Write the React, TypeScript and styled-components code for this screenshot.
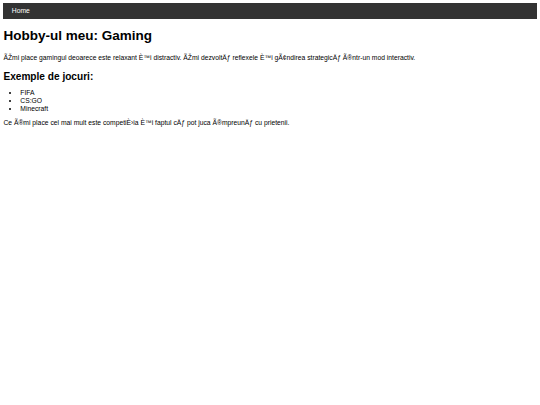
import React from 'react';
import styled, {createGlobalStyle} from "styled-components";

const GlobalStyle = createGlobalStyle`
	body {
		margin: 3.4px;
		font-family: "Liberation Sans", Arial, sans-serif;
		font-size: 6.75px;
		line-height: 1.22;
		color: #000;
		background: #fff;
	}
`

const games = ['FIFA', 'CS:GO', 'Minecraft']

export default function App() {
	return (
		<>
			<GlobalStyle/>
			<StyledNav>
				<StyledNavLink href="#">Home</StyledNavLink>
			</StyledNav>
			<StyledTitle>Hobby-ul meu: Gaming</StyledTitle>
			<StyledText>
				ÃŽmi place gamingul deoarece este relaxant È™i distractiv. ÃŽmi dezvoltÄƒ reflexele È™i gÃ¢ndirea strategicÄƒ Ã®ntr-un mod interactiv.
			</StyledText>
			<StyledSubtitle>Exemple de jocuri:</StyledSubtitle>
			<StyledList>
				{games.map(game => <li key={game}>{game}</li>)}
			</StyledList>
			<StyledText>
				Ce Ã®mi place cel mai mult este competiÈ›ia È™i faptul cÄƒ pot juca Ã®mpreunÄƒ cu prietenii.
			</StyledText>
		</>
	)
}

const StyledNav = styled.nav`
	display: flex;
	background: #333;
`
const StyledNavLink = styled.a`
	display: block;
	padding: 3.8px 8.4px;
	color: #fff;
	text-decoration: none;
`
const StyledTitle = styled.h1`
	font-size: 13.5px;
	margin: 0.67em 0;
`
const StyledText = styled.p`
	margin: 0.8em 0;
`
const StyledSubtitle = styled.h2`
	font-size: 10.125px;
	margin: 0.9em 0 0.5em;
`
const StyledList = styled.ul`
	margin: 0.75em 0 0.8em;
	padding-left: 16.9px;
`
